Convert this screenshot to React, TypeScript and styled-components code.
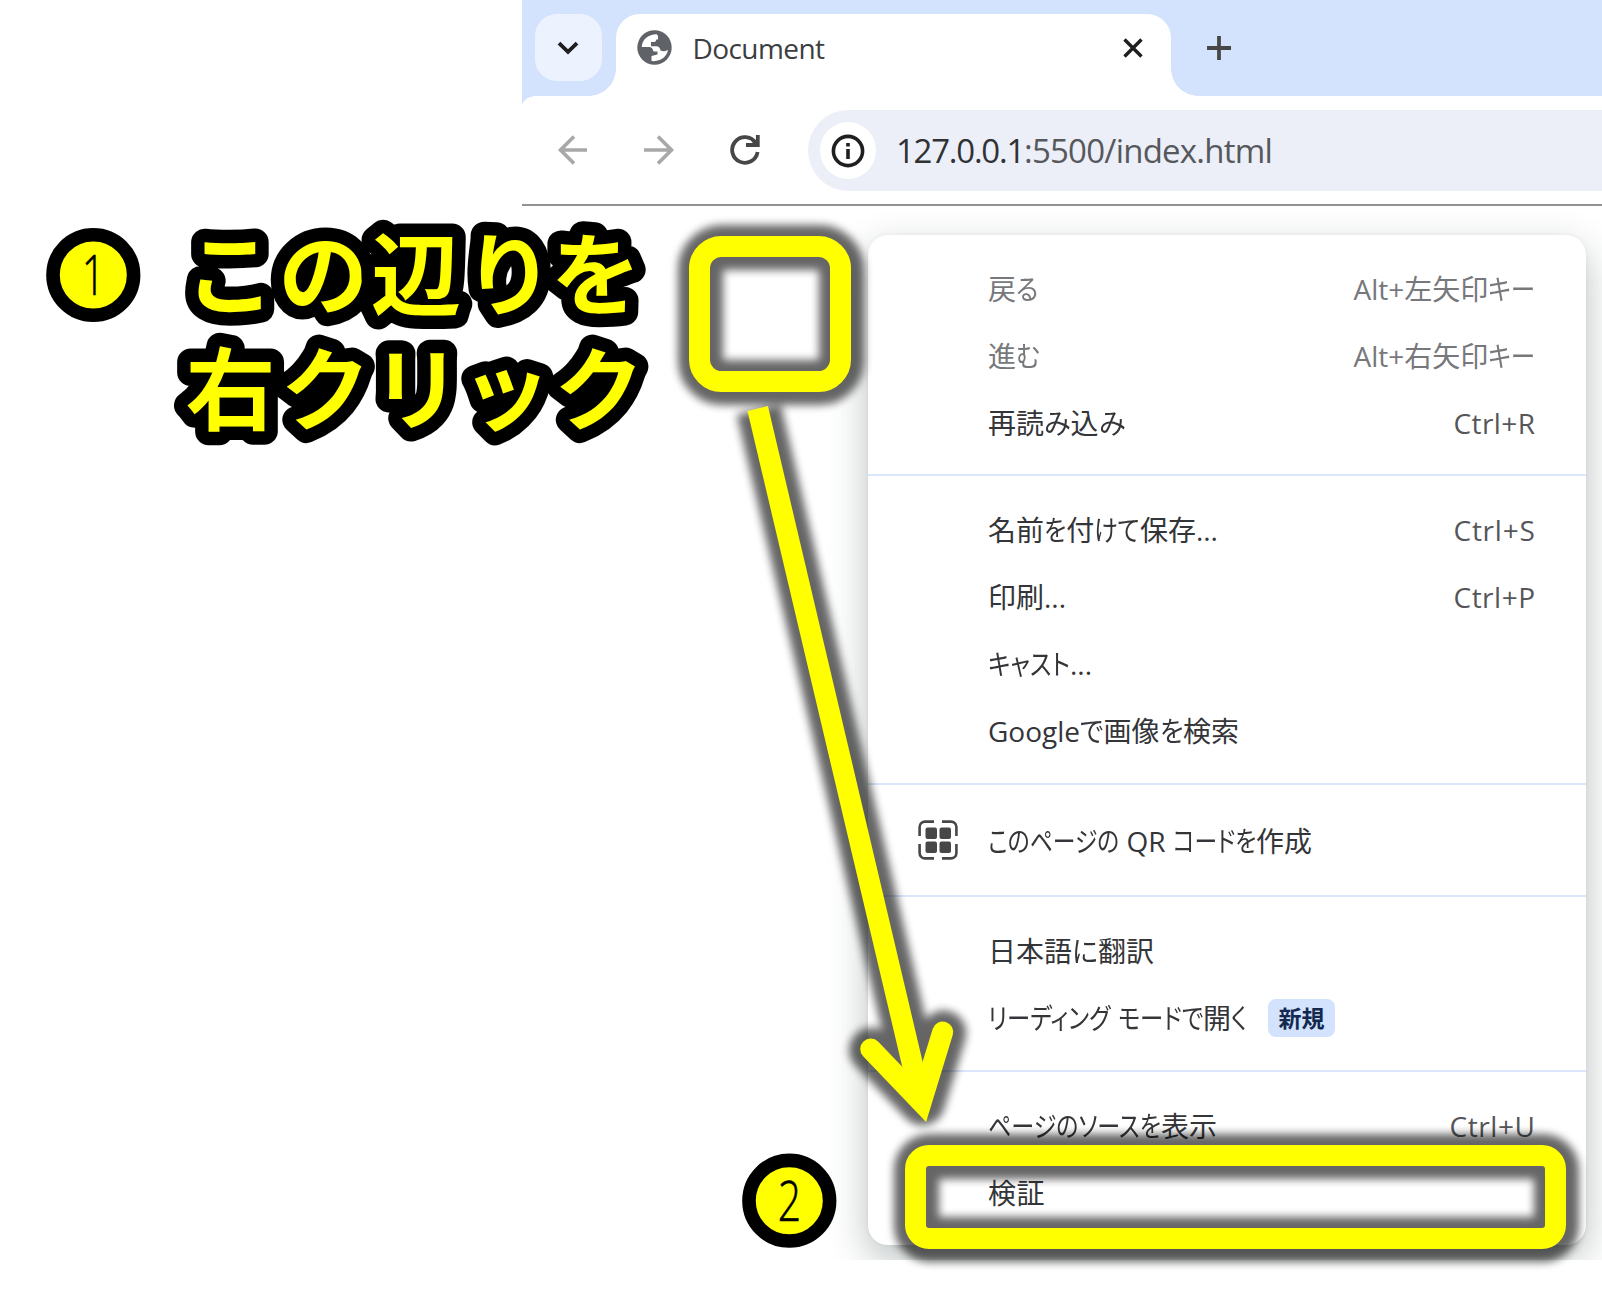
import React, { useLayoutEffect, useRef, useState } from "react";
import styled, { createGlobalStyle } from "styled-components";

const GlobalStyle = createGlobalStyle`
  html, body { margin: 0; padding: 0; background: #fff; }
  body { overflow: hidden; }
  * { box-sizing: border-box; }
`;

const uiFont = `"Open Sans", "Noto Sans CJK JP", sans-serif`;

const Page = styled.main`
  position: relative;
  width: 1602px;
  height: 1310px;
  background: #fff;
  overflow: hidden;
  font-family: ${uiFont};
`;

const Browser = styled.section`
  display: flex;
  flex-direction: column;
  width: 1080px;
  height: 1260px;
  margin-left: auto;
  overflow: hidden;
  background: #fff;
`;

const TabStrip = styled.header`
  display: flex;
  align-items: flex-start;
  flex: none;
  height: 96px;
  padding: 14px 0 0 12.5px;
  background: #d3e3fd;
`;

const TabSearch = styled.button`
  display: flex;
  align-items: center;
  justify-content: center;
  width: 67px;
  height: 67px;
  margin: 0 14.5px 0 0;
  padding: 0;
  border: 0;
  border-radius: 22px;
  background: #ecf3fe;
`;

const Tab = styled.div`
  position: relative;
  display: flex;
  align-items: center;
  width: 555px;
  height: 82px;
  padding: 0 28px 15px 21px;
  border-radius: 24px 24px 0 0;
  background: #fff;

  &::before,
  &::after {
    content: "";
    position: absolute;
    bottom: 0;
    width: 27px;
    height: 27px;
  }
  &::before {
    right: 100%;
    background: radial-gradient(circle at 0 0, transparent 26.5px, #fff 27px);
  }
  &::after {
    left: 100%;
    background: radial-gradient(circle at 100% 0, transparent 26.5px, #fff 27px);
  }
`;

const TabTitle = styled.span`
  flex: 1;
  margin-left: 20.5px;
  font-size: 28px;
  line-height: 40px;
  color: #3c3e41;
`;

const NewTab = styled.button`
  display: flex;
  align-items: center;
  justify-content: center;
  width: 40px;
  height: 68px;
  margin: 0 0 0 28px;
  padding: 0;
  border: 0;
  background: none;
`;

const Toolbar = styled.nav`
  position: relative;
  display: flex;
  flex: none;
  height: 110px;
  padding: 14px 0 0 33px;
  border-bottom: 2px solid #929292;
  background: #fff;

  &::before {
    content: "";
    position: absolute;
    top: 0;
    left: 0;
    width: 14px;
    height: 10px;
    background: radial-gradient(ellipse 14px 10px at 100% 100%, transparent 97%, #d3e3fd 100%);
  }
`;

const NavButton = styled.button`
  display: flex;
  align-items: center;
  justify-content: center;
  width: 36px;
  height: 80px;
  margin: 0 50px 0 0;
  padding: 0;
  border: 0;
  background: none;
`;

const AddressBar = styled.div`
  display: flex;
  align-items: center;
  flex: 1;
  height: 81px;
  margin-left: -5px;
  padding-left: 12px;
  border-radius: 41px 0 0 41px;
  background: #eceff8;
`;

const SiteInfo = styled.span`
  display: flex;
  align-items: center;
  justify-content: center;
  width: 56px;
  height: 57px;
  border-radius: 50%;
  background: #fff;
`;

const Url = styled.span`
  margin-left: 20px;
  font-size: 33px;
  line-height: 44px;
  color: #56585c;
`;

const Host = styled.span`
  color: #303134;
`;

const Viewport = styled.div`
  flex: 1;
  padding: 28.5px 0 0 346px;
`;

const Menu = styled.ul`
  display: flex;
  flex-direction: column;
  width: 718px;
  height: 1010px;
  margin: 0;
  padding: 21px 0 0;
  list-style: none;
  border-radius: 20px;
  background: #fff;
  box-shadow: 0 14px 38px rgba(45, 60, 60, 0.32), 0 0 4px rgba(0, 0, 0, 0.05);
`;

const Row = styled.li<{ $muted?: boolean }>`
  display: flex;
  align-items: center;
  flex: none;
  height: 67px;
  padding: 0 50.5px 0 50px;
  font-size: 28px;
  line-height: 40px;
  color: ${(p) => (p.$muted ? "#77787b" : "#343538")};
`;

const IconSlot = styled.span`
  display: flex;
  flex: none;
  width: 70px;
  padding-bottom: 2px;
`;

const Shortcut = styled.span<{ $muted?: boolean }>`
  margin-left: auto;
  color: ${(p) => (p.$muted ? "#77787b" : "#55565a")};
`;

const Separator = styled.li<{ $above: number; $below: number }>`
  flex: none;
  height: 2px;
  margin: ${(p) => p.$above}px 0 ${(p) => p.$below}px;
  background: #d9e6fc;
`;

const NewBadge = styled.span`
  display: flex;
  align-items: center;
  justify-content: center;
  width: 67px;
  height: 38px;
  margin-left: 21px;
  border-radius: 8px;
  background: #d3e3fd;
  color: #14294f;
  font-size: 23px;
  font-weight: 700;
`;

const Line = styled.span`
  display: inline-block;
  white-space: pre;
  font-weight: 400;
`;

const Kana = styled.span`
  display: inline-block;
  transform-origin: 0 50%;
  font-feature-settings: "palt";
`;

const Callouts = styled.svg`
  position: absolute;
  inset: 0;
  width: 1602px;
  height: 1310px;
  pointer-events: none;
`;

const isKana = (c: string) => /[\u3040-\u30ff]/.test(c);

/* Plain text tracked to a given width. */
function Tracked({ text, width }: { text: string; width: number }) {
  const ref = useRef<HTMLSpanElement>(null);
  const [tracking, setTracking] = useState(0);

  useLayoutEffect(() => {
    if (!ref.current) return;
    setTracking((width - ref.current.getBoundingClientRect().width) / text.length);
  }, []);

  return (
    <Line ref={ref} style={{ letterSpacing: tracking }}>
      {text}
    </Line>
  );
}

/* Mixed text whose kana are condensed so that the line takes a given width. */
function Condensed({ text, width }: { text: string; width: number }) {
  const ref = useRef<HTMLSpanElement>(null);
  const [fit, setFit] = useState<{ scale: number; widths: number[] } | null>(null);
  const runs = text.match(/[\u3040-\u30ff]+|[^\u3040-\u30ff]+/g) ?? [];

  useLayoutEffect(() => {
    if (!ref.current) return;
    const widths = [...ref.current.children].map((c) => c.getBoundingClientRect().width);
    const kana = widths.reduce((sum, w, i) => sum + (isKana(runs[i][0]) ? w : 0), 0);
    const rest = widths.reduce((sum, w) => sum + w, 0) - kana;
    setFit({ scale: (width - rest) / kana, widths });
  }, []);

  return (
    <Line ref={ref}>
      {runs.map((run, i) =>
        isKana(run[0]) ? (
          <Kana
            key={i}
            style={fit ? { width: fit.widths[i] * fit.scale, transform: `scaleX(${fit.scale})` } : undefined}
          >
            {run}
          </Kana>
        ) : (
          <span key={i}>{run}</span>
        )
      )}
    </Line>
  );
}

function Fit(props: { text: string; width: number }) {
  return [...props.text].some(isKana) ? <Condensed {...props} /> : <Tracked {...props} />;
}

const Stroke = styled.svg<{ $color: string; $width: number }>`
  display: block;
  flex: none;
  fill: none;
  stroke: ${(p) => p.$color};
  stroke-width: ${(p) => p.$width};
`;

const Globe = () => (
  <svg width="35" height="35" viewBox="0 0 35 35">
    <circle cx="17.5" cy="17.5" r="17.2" fill="#5f6368" />
    <path
      fill="#fff"
      d="M19.8 4.2C12 4 5 9 4.8 17H12C14.5 17 16 19 16.5 21.5H20.5V24.5L14.5 26V31C23 32 30 27 31 19.8C29 21.5 26 21.5 23.5 20.5C23 18 22 16.5 20 16.3H14V12H17.5C18.5 12 19 11 19.2 9.5H21V6Z"
    />
  </svg>
);

const QrIcon = () => (
  <Stroke width="40" height="40" viewBox="0 0 40 40" $color="#474747" $width={2.6}>
    <path d="M1.600 16V7a5.400 5.400 0 0 1 5.400-5.400h9M24 1.600h9A5.400 5.400 0 0 1 38.400 7v9M38.400 24v9a5.400 5.400 0 0 1-5.400 5.400h-9M16 38.400H7A5.400 5.400 0 0 1 1.600 33v-9" />
    <g fill="#474747" stroke="none">
      <rect x="7.5" y="7.5" width="11.5" height="11.5" rx="2" />
      <rect x="21.5" y="7.5" width="11.5" height="11.5" rx="2" />
      <rect x="7.5" y="21.5" width="11.5" height="11.5" rx="2" />
      <rect x="21.5" y="21.5" width="11.5" height="11.5" rx="2" />
    </g>
  </Stroke>
);

interface Entry {
  text: string;
  width: number;
  muted?: boolean;
  keys?: string;
  keysWidth?: number;
  icon?: boolean;
  badge?: string;
}

interface Group {
  above?: number;
  below?: number;
  entries: Entry[];
}

const groups: Group[] = [
  {
    entries: [
      { text: "戻る", width: 50.5, muted: true, keys: "Alt+左矢印キー", keysWidth: 182 },
      { text: "進む", width: 52, muted: true, keys: "Alt+右矢印キー", keysWidth: 182 },
      { text: "再読み込み", width: 137, keys: "Ctrl+R", keysWidth: 82 },
    ],
  },
  {
    above: 17,
    below: 20.5,
    entries: [
      { text: "名前を付けて保存...", width: 230, keys: "Ctrl+S", keysWidth: 82 },
      { text: "印刷...", width: 78, keys: "Ctrl+P", keysWidth: 82 },
      { text: "キャスト...", width: 104 },
      { text: "Googleで画像を検索", width: 251 },
    ],
  },
  { above: 18.5, below: 22.5, entries: [{ text: "このページの QR コードを作成", width: 324, icon: true }] },
  {
    above: 20.5,
    below: 20.5,
    entries: [
      { text: "日本語に翻訳", width: 166 },
      { text: "リーディング モードで開く", width: 259, badge: "新規" },
    ],
  },
  {
    above: 18.5,
    below: 20.5,
    entries: [
      { text: "ページのソースを表示", width: 229, keys: "Ctrl+U", keysWidth: 86 },
      { text: "検証", width: 57 },
    ],
  },
];

const yellow = "#ffff00";
const arrow = "M757.7 408.5 L921.3 1101.8";
const head = "M870.7 1049 L921.3 1101.8 L942.7 1032";

function Step({ x, y, n }: { x: number; y: number; n: string }) {
  return (
    <g>
      <circle cx={x} cy={y} r="40.3" fill={yellow} stroke="#000" strokeWidth="13.6" />
      <text
        transform={`translate(${x} ${y + 20}) scale(.73 1)`}
        textAnchor="middle"
        fontFamily={`"Open Sans", sans-serif`}
        fontWeight="300"
        fontSize="56"
        stroke="#000"
        strokeWidth=".6"
      >
        {n}
      </text>
    </g>
  );
}

export default function App() {
  return (
    <Page>
      <GlobalStyle />
      <Browser>
        <TabStrip>
          <TabSearch aria-label="Search tabs">
            <Stroke width="22" height="14" viewBox="0 0 22 14" $color="#1f1f1f" $width={3.8}>
              <path d="M2 2.200l9 8.600 9-8.600" />
            </Stroke>
          </TabSearch>
          <Tab>
            <Globe />
            <TabTitle>
              <Fit text="Document" width={132} />
            </TabTitle>
            <Stroke width="20" height="20" viewBox="0 0 20 20" $color="#1f1f1f" $width={3.4}>
              <path d="M1.500 1.500l17 17M18.500 1.500l-17 17" />
            </Stroke>
          </Tab>
          <NewTab aria-label="New tab">
            <Stroke width="26" height="26" viewBox="0 0 26 26" $color="#474747" $width={3.8}>
              <path d="M13 1v24M1 13h24" />
            </Stroke>
          </NewTab>
        </TabStrip>
        <Toolbar>
          <NavButton aria-label="Back">
            <Stroke width="32" height="30" viewBox="0 0 32 30" $color="#a8a8a8" $width={3.6}>
              <path d="M30 15H4M17 1.500L3.500 15l13.500 13.500" />
            </Stroke>
          </NavButton>
          <NavButton aria-label="Forward">
            <Stroke width="32" height="30" viewBox="0 0 32 30" $color="#a8a8a8" $width={3.6}>
              <path d="M1 15h27M15 1.500L28.500 15 15 28.500" />
            </Stroke>
          </NavButton>
          <NavButton aria-label="Reload">
            <Stroke width="32" height="32" viewBox="0 0 32 32" $color="#474747" $width={3.8}>
              <path d="M28.600 18A12.800 12.800 0 1 1 26.500 8.700M28.800 1V11H17M24 6.500l4 4" />
            </Stroke>
          </NavButton>
          <AddressBar>
            <SiteInfo>
              <Stroke width="34" height="34" viewBox="0 0 34 34" $color="#1f1f1f" $width={3.6}>
                <circle cx="17" cy="17" r="14.6" />
                <path d="M17 15v10M17 9v3.400" />
              </Stroke>
            </SiteInfo>
            <Url>
              <Host>
                <Fit text="127.0.0.1" width={128} />
              </Host>
              <Fit text=":5500/index.html" width={248} />
            </Url>
          </AddressBar>
        </Toolbar>
        <Viewport>
          <Menu>
            {groups.map((g, i) => (
              <React.Fragment key={i}>
                {g.above !== undefined && <Separator $above={g.above} $below={g.below ?? 21} />}
                {g.entries.map((e) => (
                  <Row key={e.text} $muted={e.muted}>
                    <IconSlot>{e.icon && <QrIcon />}</IconSlot>
                    <Fit text={e.text} width={e.width} />
                    {e.badge && <NewBadge>{e.badge}</NewBadge>}
                    {e.keys && (
                      <Shortcut $muted={e.muted}>
                        <Fit text={e.keys} width={e.keysWidth ?? 80} />
                      </Shortcut>
                    )}
                  </Row>
                ))}
              </React.Fragment>
            ))}
          </Menu>
        </Viewport>
      </Browser>

      <Callouts viewBox="0 0 1602 1310">
        <defs>
          <filter id="soft" filterUnits="userSpaceOnUse" x="0" y="0" width="1602" height="1310">
            <feGaussianBlur stdDeviation="4.5" />
          </filter>
        </defs>
        <g fill="none" stroke="#000" strokeWidth="45" transform="translate(1 1)">
          <rect x="699.5" y="246.5" width="141" height="135" rx="22" filter="url(#soft)" opacity=".6" />
          <g filter="url(#soft)" opacity=".6">
            <path d={arrow} />
            <path d={head} strokeLinecap="round" strokeLinejoin="round" />
          </g>
          <rect x="915.5" y="1155.5" width="640" height="83" rx="13.5" filter="url(#soft)" opacity=".6" />
        </g>
        <g fill="none" stroke={yellow} strokeWidth="21">
          <rect x="699.5" y="246.5" width="141" height="135" rx="22" />
          <path d={arrow} />
          <path d={head} strokeLinecap="round" strokeMiterlimit="10" />
          <rect x="915.5" y="1155.5" width="640" height="83" rx="13.5" />
        </g>
        <Step x={93.3} y={275} n="1" />
        <Step x={789.3} y={1200.7} n="2" />
        <g
          fill={yellow}
          stroke="#000"
          strokeWidth="27"
          strokeLinejoin="round"
          paintOrder="stroke"
          fontFamily={`"Noto Sans CJK JP", sans-serif`}
          fontWeight="700"
          fontSize="90"
        >
          <text x="185 278.5 371 464 551" y="308">
            この辺りを
          </text>
          <text x="185.5 280.5 371.5 461 554" y="422.5">
            右クリック
          </text>
        </g>
      </Callouts>
    </Page>
  );
}
